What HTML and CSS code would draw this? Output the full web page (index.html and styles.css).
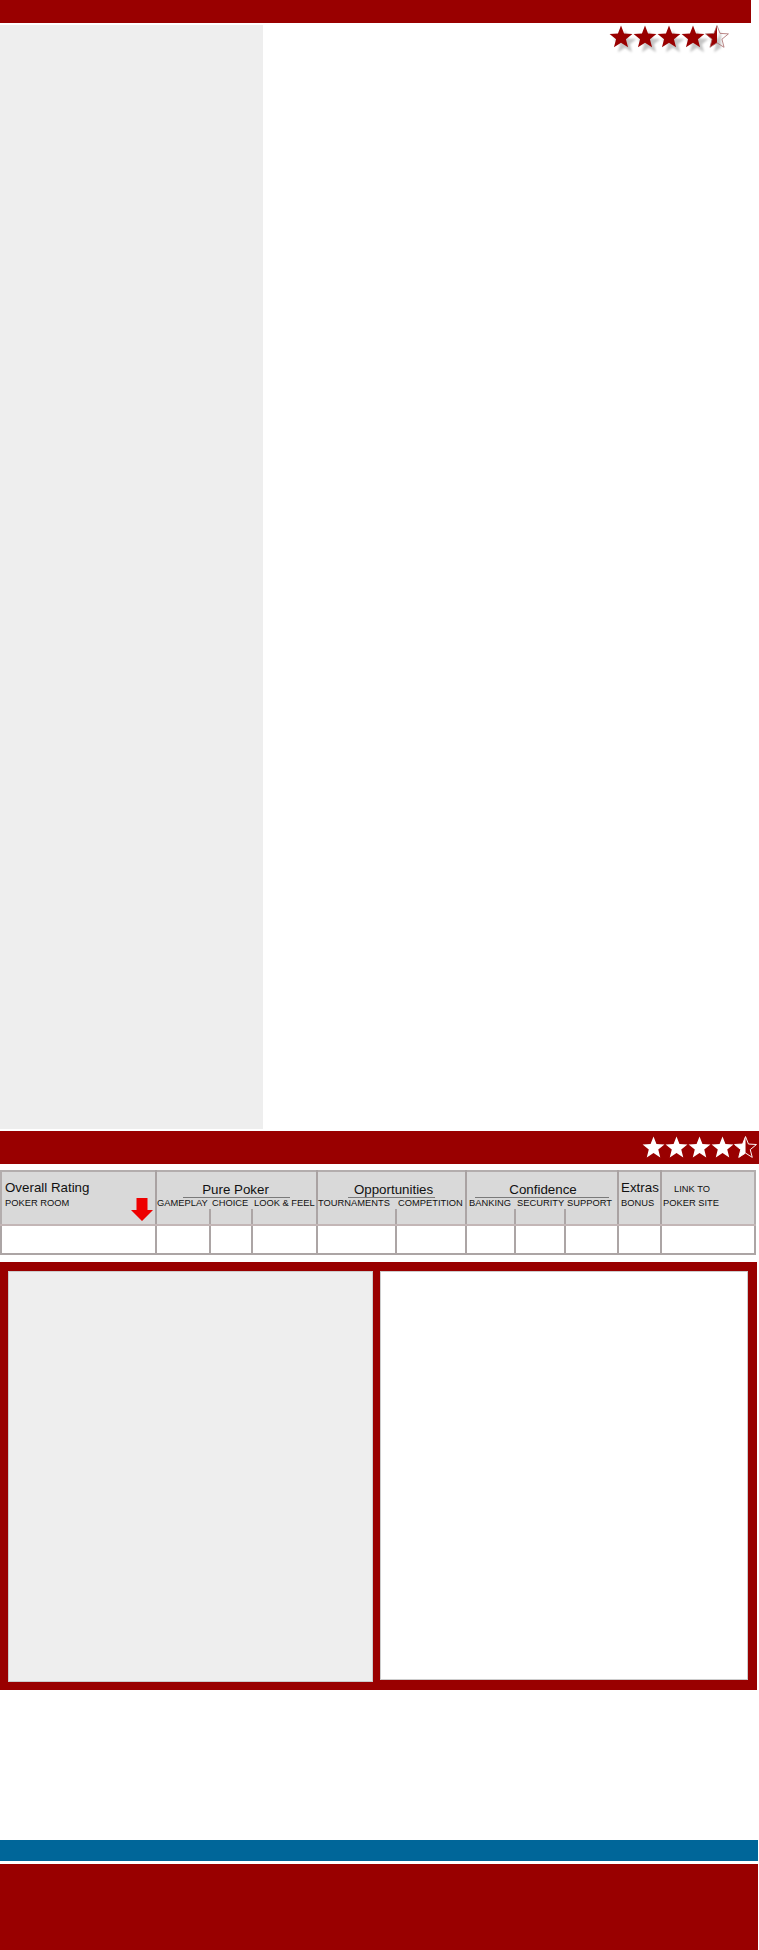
FILE: index.html
```html
<!DOCTYPE html>
<html lang="en">
<head>
<meta charset="utf-8">
<title>Poker Room Review</title>
<link rel="stylesheet" href="styles.css">
</head>
<body>
<div class="page">
  <header class="topbar"></header>

  <div class="main">
    <aside class="sidebar"></aside>
    <section class="content">
      <svg class="stars-top" width="130" height="32" viewBox="0 0 130 32" aria-label="4.5 stars">
        <defs>
          <polygon id="star-red" points="12,0.6 15.06,8.39 23.41,8.89 16.95,14.21 19.05,22.31 12,17.8 4.95,22.31 7.05,14.21 0.59,8.89 8.94,8.39"/>
          <filter id="soft-shadow" x="-30%" y="-30%" width="160%" height="160%">
            <feGaussianBlur stdDeviation="1.3"/>
          </filter>
          <clipPath id="half-red"><rect x="96" y="0" width="12" height="32"/></clipPath>
          <clipPath id="half-shadow"><rect x="100" y="0" width="12" height="32"/></clipPath>
        </defs>
        <g fill="#c4c4c4" filter="url(#soft-shadow)">
          <use href="#star-red" x="4" y="5"/>
          <use href="#star-red" x="28" y="5"/>
          <use href="#star-red" x="52" y="5"/>
          <use href="#star-red" x="76" y="5"/>
          <g clip-path="url(#half-shadow)"><use href="#star-red" x="100" y="5"/></g>
        </g>
        <g fill="#990000">
          <use href="#star-red" x="0"/>
          <use href="#star-red" x="24"/>
          <use href="#star-red" x="48"/>
          <use href="#star-red" x="72"/>
          <g clip-path="url(#half-red)"><use href="#star-red" x="96"/></g>
        </g>
        <use href="#star-red" x="96" fill="none" stroke="#a86a6a" stroke-width="0.8"/>
      </svg>
    </section>
  </div>

  <div class="review-bar">
    <svg class="stars-bar" width="116" height="23" viewBox="0 0 121 24" aria-label="4.5 stars">
      <defs>
        <polygon id="star-white" points="12,0.6 15.06,8.39 23.41,8.89 16.95,14.21 19.05,22.31 12,17.8 4.95,22.31 7.05,14.21 0.59,8.89 8.94,8.39"/>
        <clipPath id="half-white"><rect x="96" y="0" width="12" height="24"/></clipPath>
      </defs>
      <g fill="#ffffff">
        <use href="#star-white" x="0"/>
        <use href="#star-white" x="24"/>
        <use href="#star-white" x="48"/>
        <use href="#star-white" x="72"/>
        <g clip-path="url(#half-white)"><use href="#star-white" x="96"/></g>
      </g>
      <use href="#star-white" x="96" fill="none" stroke="#ffffff" stroke-width="1"/>
    </svg>
  </div>

  <table class="ratings">
    <colgroup>
      <col class="w-room">
      <col class="w-gameplay">
      <col class="w-choice">
      <col class="w-look">
      <col class="w-tourn">
      <col class="w-comp">
      <col class="w-bank">
      <col class="w-secu">
      <col class="w-supp">
      <col class="w-bonus">
      <col class="w-link">
    </colgroup>
    <thead>
      <tr class="row-titles">
        <th class="room" rowspan="3">
          <div class="room-box">
            <span class="title">Overall Rating</span>
            <span class="label">POKER ROOM</span>
            <svg class="arrow" width="22" height="23" viewBox="0 0 22 23"><polygon points="5.5,0 16.5,0 16.5,12 22,12 11,23 0,12 5.5,12" fill="#ee0000"/></svg>
          </div>
        </th>
        <th class="group" colspan="3"><span class="group-name pure">Pure Poker</span></th>
        <th class="group" colspan="2"><span class="group-name opps">Opportunities</span></th>
        <th class="group" colspan="3"><span class="group-name conf">Confidence</span></th>
        <th class="extras" rowspan="3">
          <span class="title">Extras</span>
          <span class="label bonus">BONUS</span>
        </th>
        <th class="link" rowspan="3">
          <span class="label link-top">LINK TO</span>
          <span class="label">POKER SITE</span>
        </th>
      </tr>
      <tr class="row-labels">
        <th class="start flush">GAMEPLAY</th>
        <th>CHOICE</th>
        <th>LOOK &amp; FEEL</th>
        <th class="start flush">TOURNAMENTS</th>
        <th>COMPETITION</th>
        <th class="start">BANKING</th>
        <th>SECURITY</th>
        <th>SUPPORT</th>
      </tr>
      <tr class="row-stubs">
        <th></th><th></th><th></th>
        <th></th><th></th>
        <th></th><th></th><th></th>
      </tr>
    </thead>
    <tbody>
      <tr class="row-body">
        <td></td><td></td><td></td><td></td><td></td><td></td>
        <td></td><td></td><td></td><td></td><td></td>
      </tr>
    </tbody>
  </table>

  <div class="frame">
    <div class="panel panel-grey"></div>
    <div class="panel panel-white"></div>
  </div>

  <div class="blank"></div>
  <div class="bluebar"></div>
  <footer class="footer"></footer>
</div>
</body>
</html>
```

FILE: styles.css
```css
html, body {
  margin: 0;
  padding: 0;
  background: #ffffff;
  font-family: "Liberation Sans", Arial, sans-serif;
  color: #111111;
}

.page {
  width: 759px;
}

/* top strip */
.topbar {
  width: 751px;
  height: 23px;
  background: #990000;
  margin-bottom: 2px;
}

.main {
  display: flex;
  height: 1104px;
}

.sidebar {
  width: 263px;
  background: #eeeeee;
}

.content {
  flex: 1;
  display: flex;
  justify-content: flex-end;
  align-items: flex-start;
  padding-right: 20px;
}

.stars-top {
  display: block;
}

/* red rating strip */
.review-bar {
  margin-top: 2px;
  height: 33px;
  background: #990000;
  display: flex;
  justify-content: flex-end;
  align-items: center;
  padding-right: 1px;
}

.stars-bar {
  display: block;
}

/* ratings table */
.ratings {
  margin-top: 6px;
  width: 756px;
  border-collapse: collapse;
  table-layout: fixed;
  border: 2px solid #b3adad;
}

.w-room { width: 155px; }
.w-gameplay { width: 54px; }
.w-choice { width: 42px; }
.w-look { width: 65px; }
.w-tourn { width: 79px; }
.w-comp { width: 70px; }
.w-bank { width: 49px; }
.w-secu { width: 50px; }
.w-supp { width: 53px; }
.w-bonus { width: 43px; }
.w-link { width: 94px; }

.ratings thead {
  background: #d9d9d9;
}

.ratings th {
  padding: 0;
  font-weight: normal;
  text-align: left;
  vertical-align: top;
  white-space: nowrap;
  border: none;
}

.title {
  display: block;
  font-size: 13.33px;
  line-height: 16px;
  color: #111111;
}

.label {
  display: block;
  font-size: 9.33px;
  line-height: 11px;
  color: #111111;
}

/* first header row */
.row-titles {
  height: 26px;
}

.row-titles .room {
  border-right: 2px solid #a9a2a2;
  border-bottom: 2px solid #c3b6b6;
  padding: 8px 0 0 3px;
}

.room-box {
  display: grid;
  grid-template-columns: 1fr auto;
  grid-template-rows: 16px auto;
}

.room-box .title {
  grid-column: 1 / 3;
}

.room-box .label {
  margin-top: 2px;
}

.room-box .arrow {
  display: block;
  grid-column: 2;
  grid-row: 2;
  margin: 2px 2px 0 0;
}

.row-titles .group {
  text-align: center;
  padding-top: 8px;
  border-left: 2px solid #a9a2a2;
  border-right: 2px solid #a9a2a2;
}

.group-name {
  font-size: 13.33px;
  line-height: 16px;
  border-bottom: 1px solid #7a7a7a;
}

.group-name.pure { padding: 0 21px 0 19px; }
.group-name.opps { padding: 0 2px 0 6px; }
.group-name.conf { padding: 0 32px 0 34px; }

.row-titles .extras {
  padding: 8px 0 0 2px;
  border-left: 2px solid #a9a2a2;
  border-right: 2px solid #a9a2a2;
  border-bottom: 2px solid #c3b6b6;
}

.extras .bonus {
  margin-top: 2px;
}

.row-titles .link {
  padding: 12px 0 0 1px;
  border-bottom: 2px solid #c3b6b6;
}

.link .link-top {
  padding-left: 11px;
  margin-bottom: 3px;
}

/* sub column captions */
.row-labels {
  height: 11px;
}

.row-labels th {
  font-size: 9.33px;
  line-height: 11px;
  padding: 0 0 0 2px;
  overflow: visible;
}

.row-labels th.start {
  border-left: 2px solid #a9a2a2;
}

.row-labels th.flush {
  padding-left: 0;
}

.row-stubs {
  height: 16px;
}

.row-stubs th {
  border-left: 2px solid #aca5a5;
  border-bottom: 2px solid #c3b6b6;
}

/* empty score row */
.row-body {
  height: 29px;
}

.row-body td {
  padding: 0;
  background: #ffffff;
  border: 2px solid #aca5a5;
  border-top: 2px solid #c3b6b6;
}

/* red framed content area */
.frame {
  margin-top: 7px;
  width: 757px;
  box-sizing: border-box;
  background: #990000;
  padding: 9px 9px 8px 8px;
  display: flex;
  align-items: flex-start;
  gap: 7px;
}

.panel {
  box-sizing: border-box;
  border: 1px solid #cccccc;
}

.panel-grey {
  width: 365px;
  height: 411px;
  background: #eeeeee;
}

.panel-white {
  width: 368px;
  height: 409px;
  background: #ffffff;
}

.blank {
  height: 150px;
}

.bluebar {
  width: 758px;
  height: 21px;
  background: #006699;
  margin-bottom: 3px;
}

.footer {
  width: 758px;
  height: 90px;
  background: #990000;
}
```
